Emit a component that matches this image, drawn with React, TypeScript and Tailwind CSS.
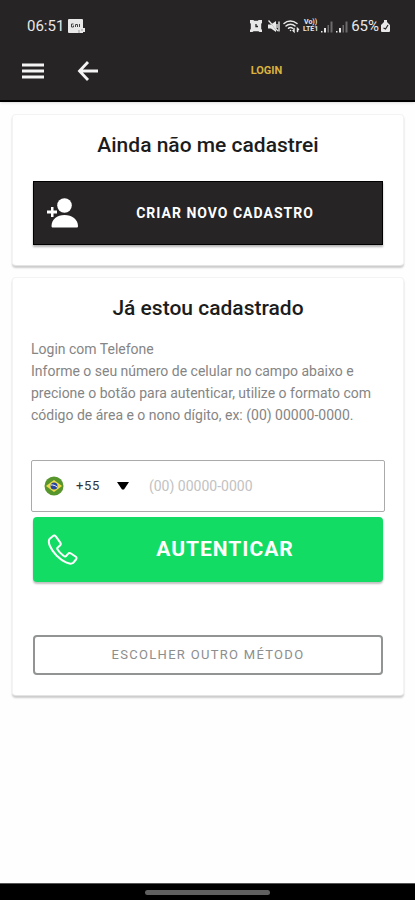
import { useState } from "react";
import type { ReactNode } from "react";

function StatusBar() {
  return (
    <div className="flex h-12 items-center justify-between pt-1 pr-6 pl-[27px] text-[#e8e8e8]">
      <div className="flex items-center gap-1">
        <span className="text-[15px] leading-5">06:51</span>
        <svg width="17" height="15" viewBox="0 0 17 15">
          <path d="M1 0h13a1 1 0 0 1 1 1v8h2v4h-2v1H1a1 1 0 0 1-1-1V1a1 1 0 0 1 1-1z" fill="#e8e8e8" />
          <path d="M5.500 5H3.500v3h2V6.500M7.500 8V5.500h2V8M11.500 5v3" fill="none" stroke="#444" strokeWidth="1" />
          <path d="M11 11v3M14 10v2" stroke="#999" strokeWidth="1" />
        </svg>
      </div>

      <div className="flex items-center gap-[3px]">
        {/* alarm */}
        <svg width="12" height="12" viewBox="0 0 12 12" className="mr-[3px]">
          <path d="M0 0h3.500l.500.800h4L8.500 0H12v3l-.800.800v5L12 10v2H9.500l-1-.800h-5l-1 .800H0v-2l.800-1.200v-5L0 3z" fill="#e8e8e8" />
          <path d="M6 4V6.500H8" stroke="#262425" strokeWidth="1.300" fill="none" />
        </svg>
        {/* muted speaker */}
        <svg width="12" height="13" viewBox="0 0 12 13">
          <path d="M0 4.500h3L8 1v11L3 8.500H0z" fill="#e8e8e8" />
          <path d="M1 1.500l9 10" stroke="#262425" strokeWidth="1" />
          <path d="M.500.500l9.500 10.500" stroke="#e8e8e8" strokeWidth="1.200" />
          <path d="M9 4v4M11 1.500v10" stroke="#e8e8e8" strokeWidth="1.400" />
        </svg>
        {/* wifi */}
        <svg width="17" height="15" viewBox="0 0 17 15" fill="none" stroke="#e8e8e8" strokeWidth="1.500" strokeLinecap="round">
          <path d="M1 4.500C4.500 1 10 1 14 4.500M3 7c2.500-2.500 6.500-2.500 9 0M5.500 9.300c1-1 3-1 4 0" />
          <path d="M7.500 11.500h.1M11 9.500v3l-1-1M14.500 12.500v-3l1 1" />
        </svg>
        <div className="flex h-[14px] w-[15px] flex-col items-center text-[7px] font-bold leading-[7px]">
          <span>Vo))</span>
          <span>LTE1</span>
        </div>
        {[0, 1].map((sim) => (
          <svg key={sim} width="12" height="13" viewBox="0 0 12 13">
            <path d="M0 11h1.500v1.500H0zM3 8h2v4.500H3z" fill="#e8e8e8" />
            <path d="M6.500 5h1.500v7.500H6.500zM9.500 1.500h2v11h-2z" fill="#6d6b6c" />
          </svg>
        ))}
        <div className="flex items-center">
          <span className="text-[15px] leading-5">65%</span>
          <svg width="11" height="14" viewBox="0 0 11 14" className="ml-px">
            <path d="M4 1h3v2l3 3v6a1 1 0 0 1-1 1H2a1 1 0 0 1-1-1V6l3-3z" fill="#e8e8e8" />
            <path d="M3.500 9l2 1 2.500-4" fill="none" stroke="#262425" strokeWidth="1.200" />
          </svg>
        </div>
      </div>
    </div>
  );
}

function Header() {
  return (
    <header className="border-b-2 border-black bg-[#262425] shadow-sm">
      <StatusBar />
      <div className="flex h-[52px] items-start">
        <button type="button" aria-label="Menu" className="ml-5 flex h-[46px] w-[26px] items-center justify-center">
          <svg width="22" height="16" viewBox="0 0 22 16" fill="#f4f4f4">
            <path d="M0 0.500h22v3H0zM0 6.500h22v3H0zM0 12.500h22v3H0z" />
          </svg>
        </button>
        <button type="button" aria-label="Voltar" className="ml-7 flex h-[46px] w-7 items-center justify-center">
          <svg width="22" height="20" viewBox="0 0 22 20" fill="none" stroke="#f4f4f4" strokeWidth="2.800">
            <path d="M11 1L2.500 10l8.500 9M2.500 10H21" />
          </svg>
        </button>
        <h1 className="ml-4 flex h-[46px] flex-1 items-center justify-center text-[11px] font-bold text-[#d9b23f]">
          LOGIN
        </h1>
      </div>
    </header>
  );
}

function Card({ title, children }: { title: string; children: ReactNode }) {
  return (
    <section className="rounded border border-[#f3f3f3] border-b-[#e4e4e4] bg-white px-5 pt-4 pb-5 shadow-[0_2px_2px_rgba(0,0,0,0.2)]">
      <h2 className="text-center text-[21px] font-medium leading-7 text-[#1c1c1c]">{title}</h2>
      {children}
    </section>
  );
}

function BrazilFlag() {
  return (
    <svg width="20" height="20" viewBox="0 0 20 20">
      <circle cx="10" cy="10" r="9.500" fill="#57962c" />
      <path d="M10 4l8 6-8 6-8-6z" fill="#f1dc4c" />
      <circle cx="10" cy="10" r="3.500" fill="#26459b" />
      <path d="M6.800 9c2.200-.3 4.700.4 6.300 2.200" fill="none" stroke="#fff" strokeWidth="1" />
    </svg>
  );
}

export default function App() {
  const [phone, setPhone] = useState("");

  return (
    <div className="flex min-h-screen flex-col bg-[#fefefe] font-[Roboto,sans-serif]">
      <Header />

      <main className="flex flex-1 flex-col gap-[11px] pt-3 pr-[11px] pl-3">
        <Card title="Ainda não me cadastrei">
          <button
            type="button"
            className="mt-[22px] flex h-16 w-full items-center border border-black bg-[#262425] px-3 text-white shadow-[0_2px_2px_rgba(0,0,0,0.3)]"
          >
            <svg width="34" height="34" viewBox="0 0 34 34" fill="#fff">
              <circle cx="18.500" cy="9.500" r="7.300" />
              <path d="M5.500 30c0-6.500 5.500-11 13-11s13.500 4.500 13.500 11c0 1-.5 1.500-1.500 1.500H7c-1 0-1.500-.5-1.500-1.500z" />
              <path d="M5 11h2.500v3.500H11v3H7.500V21H5v-3.500H1v-3h4z" />
            </svg>
            <span className="flex-1 text-center text-sm font-bold tracking-[1px]">CRIAR NOVO CADASTRO</span>
          </button>
        </Card>

        <Card title="Já estou cadastrado">
          <p className="-mx-0.5 mt-4 text-sm leading-[22px] text-[#858585]">
            Login com Telefone
            <br />
            Informe o seu número de celular no campo abaixo e precione o botão para autenticar, utilize o formato com
            código de área e o nono dígito, ex: (00) 00000-0000.
          </p>

          <div className="-mx-0.5 mt-[34px] flex h-[52px] items-center rounded-xs border border-[#aaa] pl-3">
            <button type="button" aria-label="Código do país" className="flex items-center">
              <BrazilFlag />
              <span className="ml-3 text-[13px] tracking-wider text-[#333]">+55</span>
              <svg width="12" height="8" viewBox="0 0 12 8" className="ml-[17px]">
                <path d="M0 0h12L7 7.500H5z" fill="#000" />
              </svg>
            </button>
            <input
              type="tel"
              aria-label="Telefone"
              placeholder="(00) 00000-0000"
              value={phone}
              onChange={(e) => setPhone(e.target.value)}
              className="ml-5 h-full min-w-0 flex-1 text-sm text-[#333] outline-none placeholder:text-[#c2c2c2]"
            />
          </div>

          <button
            type="button"
            className="mt-[5px] flex h-[65px] w-full items-center rounded bg-[#12dc64] px-3 text-white shadow-[0_2px_2px_rgba(0,0,0,0.25)]"
          >
            <svg width="34" height="34" viewBox="0 0 34 34" fill="none" stroke="#fff" strokeWidth="2" strokeLinejoin="round">
              <path d="M8 3L4.500 6C2.500 9 5 15.500 11.500 22.500 18 29 25 32 28 30l3-3.500c1-1.300.5-2.300-.5-3l-4.500-3c-1.200-.8-2.300-.5-3 .3l-1.700 2c-.8 1-1.800.7-2.800 0-2-1.500-4.500-4-5.800-6-.6-.9-.6-1.900.3-2.600l2-1.700c.9-.8 1-1.800.3-2.900L11 3.700C10.200 2.500 9 2.100 8 3z" />
            </svg>
            <span className="flex-1 text-center text-[21px] font-bold tracking-[1px]">AUTENTICAR</span>
          </button>

          <button
            type="button"
            className="mt-[53px] h-10 w-full rounded border-2 border-[#929494] text-[13px] tracking-widest text-[#8c8e8e]"
          >
            ESCOLHER OUTRO MÉTODO
          </button>
        </Card>
      </main>

      <footer className="flex h-[17px] items-center justify-center border-t border-[#555] bg-black">
        <div className="h-[5px] w-[30%] rounded-full bg-[#606060]" />
      </footer>
    </div>
  );
}
